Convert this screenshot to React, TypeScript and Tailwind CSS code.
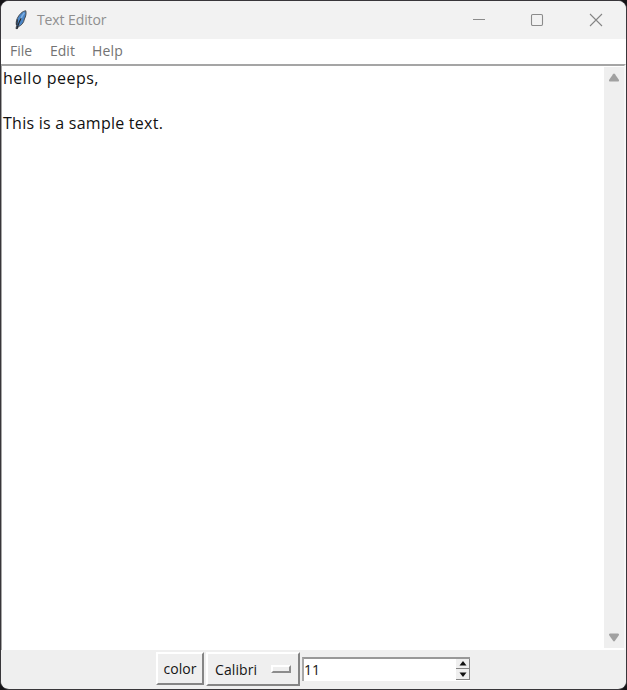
import React from 'react';

function Feather() {
  return (
    <svg width="14" height="20" viewBox="0 0 14 20">
      <path d="M11.8 .8C8.6 1 5.2 4.4 3.2 8.6C2 11.4 2 14 2.6 15.6L2 18.6L3.4 18.6L4.4 16.6C7.4 15.6 9.8 12.8 10.4 9C11.8 6.6 12.4 3.4 11.8 .8Z" fill="#4b86c6" stroke="#4a4d52" strokeWidth="1" />
      <path d="M10.4 2.8C8.4 5 7.2 7.4 6.4 10" fill="none" stroke="#7fb0e4" strokeWidth="1.4" />
      <path d="M7.2 8.2L5.2 12.2L2.8 18.8M3.4 9.5L2.8 15" fill="none" stroke="#24262b" strokeWidth="1.1" />
    </svg>
  );
}

function TitleBar() {
  return (
    <header className="flex h-[38px] shrink-0 items-center bg-[#f2f2f2] pl-[13px] text-[#8f8f8f]">
      <Feather />
      <h1 className="ml-[9px] grow text-[14px] leading-5 tracking-[-0.1px]">Text Editor</h1>
      <div className="flex w-[176px] shrink-0">
        <button className="flex w-[58px] justify-center" aria-label="Minimize">
          <svg width="14" height="14" fill="none" stroke="#8b8b8b"><path d="M1 6.5H13" /></svg>
        </button>
        <button className="flex w-[58px] justify-center" aria-label="Maximize">
          <svg width="14" height="14" fill="none" stroke="#8b8b8b" strokeWidth="1.1"><rect x="1.5" y="1.5" width="11" height="11" rx="1.2" /></svg>
        </button>
        <button className="flex w-[60px] justify-center" aria-label="Close">
          <svg width="14" height="14" fill="none" stroke="#858585" strokeWidth="1.1"><path d="M1 1L13 13M13 1L1 13" /></svg>
        </button>
      </div>
    </header>
  );
}

function MenuBar() {
  return (
    <nav className="flex h-[25px] shrink-0 items-center bg-white pb-px pl-[9px] text-[14px] leading-5 text-[#737373]">
      <span className="w-[40px]">File</span>
      <span className="w-[42px]">Edit</span>
      <span className="tracking-[0.2px]">Help</span>
    </nav>
  );
}

function ScrollBar() {
  return (
    <div className="mt-px mb-[2px] flex w-[20px] shrink-0 flex-col items-center justify-between bg-[#efefef] pt-[6px] pb-[6px]">
      <svg width="12" height="9"><path d="M5 1.2Q6 0 7 1.2L11 7Q11.3 8.5 10 8.5H2Q.7 8.5 1 7Z" fill="#a1a1a1" /></svg>
      <svg width="12" height="9"><path d="M5 7.8Q6 9 7 7.8L11 2Q11.3 .5 10 .5H2Q.7 .5 1 2Z" fill="#a1a1a1" /></svg>
    </div>
  );
}

function Toolbar() {
  return (
    <footer className="flex h-[38px] shrink-0 items-start bg-[#efefef] pt-[2px] pl-[155px] text-[14px] leading-5 text-[#151515]">
      <button className="flex h-[33px] w-[48px] items-center justify-center border-2 border-t-white border-r-[#858585] border-b-[#858585] border-l-white pt-px">color</button>
      <button className="ml-[2px] flex h-[34px] w-[94px] items-center justify-between border-2 border-t-white border-r-[#858585] border-b-[#858585] border-l-white pr-[7px] pl-[7px]">
        <span className="pt-px tracking-[0.1px]">Calibri</span>
        <span className="h-[8px] w-[20px] border-2 border-t-white border-r-[#8c8c8c] border-b-[#8c8c8c] border-l-white bg-[#efefef]" />
      </button>
      <div className="mt-[5px] ml-[2px] flex h-[24px] w-[168px] border-t-2 border-l-2 border-t-[#989898] border-l-[#a8a8a8] bg-white">
        <span className="grow leading-[22px]">11</span>
        <div className="flex h-[21px] w-[14px] flex-col">
          <span className="flex h-[10px] items-center justify-center border-r border-b border-[#858585] bg-[#efefef]">
            <svg width="8" height="5"><path d="M4 0L7.5 4.5H.5Z" fill="#111" /></svg>
          </span>
          <span className="flex h-[11px] items-center justify-center border-r border-b border-[#858585] bg-[#efefef]">
            <svg width="8" height="5"><path d="M4 5L7.5 .5H.5Z" fill="#111" /></svg>
          </span>
        </div>
      </div>
    </footer>
  );
}

export default function App() {
  return (
    <div className="h-[690px] w-[627px] bg-[#151316] font-['Open_Sans','Noto_Sans',sans-serif]">
      <div className="flex h-[690px] w-[627px] flex-col overflow-hidden rounded-[9px] border border-[#38363a] bg-[#efefef]">
        <TitleBar />
        <MenuBar />
        <main className="flex h-[586px] shrink-0 border-t-2 border-r-2 border-l border-t-[#a5a5a5] border-r-[#f7f7f7] border-l-[#a5a5a5] bg-white">
          <div className="grow pt-[1px] pl-px font-['Open_Sans','Noto_Sans',sans-serif] text-[16px] leading-[22.5px] text-[#111111]">
            <p className="tracking-[0.5px]">hello peeps,</p>
            <p className="pt-[22.5px] tracking-[0.25px]">This is a sample text.</p>
          </div>
          <ScrollBar />
        </main>
        <Toolbar />
      </div>
    </div>
  );
}
